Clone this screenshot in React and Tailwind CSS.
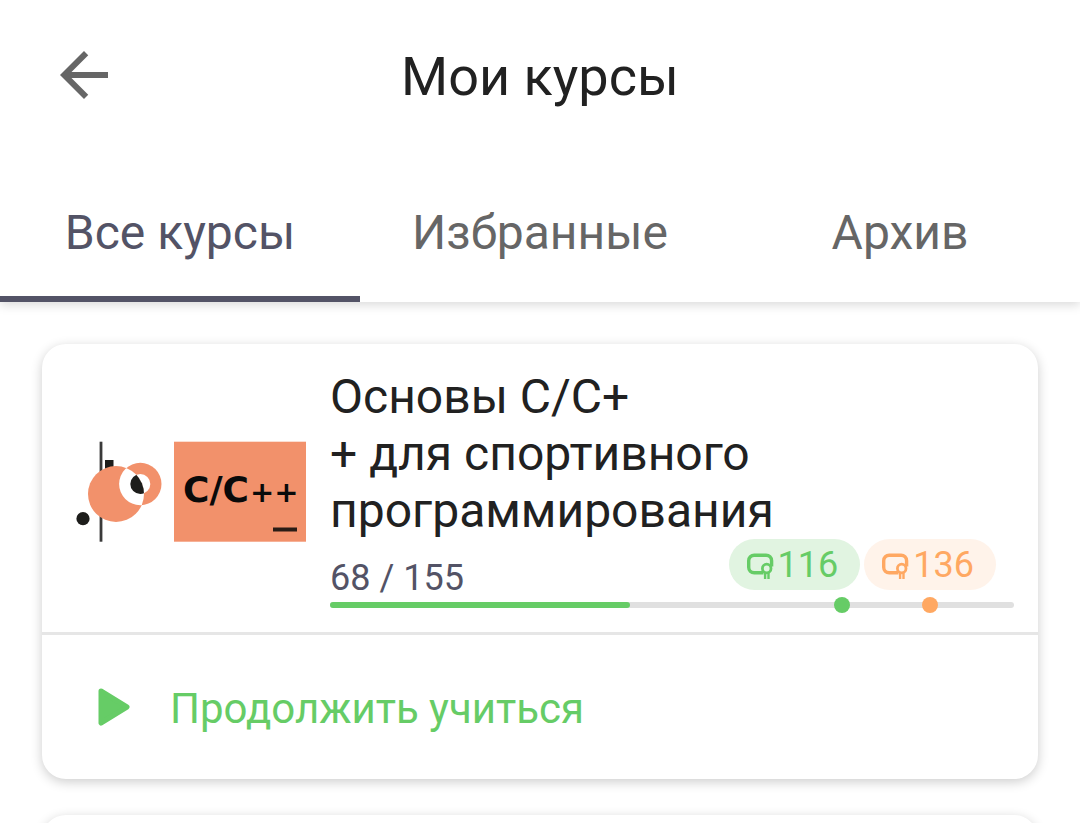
const TOTAL = 155;
const DONE = 68;
const GOALS = [
  { value: 116, pill: "bg-[#e1f4e1] text-[#66cc66]", dot: "bg-[#66cc66]" },
  { value: 136, pill: "bg-[#fff3ea] text-[#ffa862]", dot: "bg-[#ffa862]" },
];
const TABS = ["Все курсы", "Избранные", "Архив"];

const percent = (value) => `${(value / TOTAL) * 100}%`;

function ArrowBack() {
  return (
    <svg viewBox="4 4 16 16" className="size-12" fill="currentColor" aria-hidden="true">
      <path d="M20 11H7.83l5.59-5.59L12 4l-8 8 8 8 1.41-1.41L7.83 13H20v-2z" />
    </svg>
  );
}

function CertificateIcon() {
  return (
    <svg viewBox="0 0 27 28" className="h-7 w-[27px]" fill="none" stroke="currentColor" aria-hidden="true">
      <path d="M16.500 21.800H7.200A5.500 5.500 0 0 1 1.700 16.300V9.700A5.500 5.500 0 0 1 7.200 4.200H19.100A5.500 5.500 0 0 1 24.600 9.700V15.500" strokeWidth="3.400" />
      <circle cx="19.700" cy="17.500" r="4.300" strokeWidth="2.800" />
      <path d="M18.100 21V28M21.500 21V28" strokeWidth="2.400" />
    </svg>
  );
}

function PlayIcon() {
  return (
    <svg viewBox="0 0 32 38" className="h-[38px] w-8" fill="currentColor" stroke="currentColor" strokeWidth="5" strokeLinejoin="round" aria-hidden="true">
      <path d="M3 3L29 19L3 35Z" />
    </svg>
  );
}

function CourseCover() {
  return (
    <svg viewBox="0 0 230 101" className="w-[230px] shrink-0" role="img" aria-label="C/C++">
      <defs>
        <clipPath id="bigCircle">
          <circle cx="40" cy="53" r="28" />
        </clipPath>
      </defs>
      <rect x="23.600" y="0.700" width="2.800" height="100" fill="#3a3a3a" />
      <rect x="29" y="19" width="8.500" height="10" fill="#1d1d1b" />
      <circle cx="7" cy="77.700" r="6.600" fill="#1d1d1b" />
      <circle cx="64.300" cy="43" r="21.200" fill="#f2916b" />
      <circle cx="64.300" cy="43" r="10" fill="#fff" />
      <circle cx="40" cy="53" r="28" fill="#f2916b" />
      <g clipPath="url(#bigCircle)">
        <circle cx="64.300" cy="43" r="21.200" fill="#fff" />
        <circle cx="64.300" cy="43" r="10" fill="#1d1d1b" />
      </g>
      <rect x="98" y="0.700" width="132" height="100" fill="#f2916b" />
      <text y="61" fontWeight="700" fontFamily="'DejaVu Sans', sans-serif" fill="#0a0a0a">
        <tspan x="107" fontSize="36">C/C</tspan>
        <tspan x="174" fontSize="29">++</tspan>
      </text>
      <rect x="197" y="86.500" width="24" height="4" fill="#2a1c16" />
    </svg>
  );
}

function CourseCard() {
  return (
    <article className="rounded-3xl bg-white shadow-[0_3px_12px_rgba(0,0,0,0.2)]">
      <div className="flex items-center gap-6 border-b-3 border-[#e6e6e6] pt-6 pr-6 pb-6 pl-[34px]">
        <div className="shrink-0 pt-1.5">
          <CourseCover />
        </div>
        <div className="min-w-0 flex-1">
          <h2 className="text-[48px] leading-[57px] text-[#212121]">
            Основы C/C+
            <br />+ для спортивного программирования
          </h2>
          <div className="flex items-end justify-between pr-[18px]">
            <p className="text-[36px] leading-6 text-[#535366]">
              {DONE} / {TOTAL}
            </p>
            <ul className="flex gap-1">
              {GOALS.map((goal) => (
                <li key={goal.value} className={`flex h-[51px] items-center gap-1 rounded-full pr-[22px] pl-[18px] text-[36px] leading-10 ${goal.pill}`}>
                  <CertificateIcon />
                  {goal.value}
                </li>
              ))}
            </ul>
          </div>
          <div
            className="relative mt-3 h-1.5 rounded-full bg-[#e0e0e0]"
            role="progressbar"
            aria-label="Прогресс"
            aria-valuenow={DONE}
            aria-valuemax={TOTAL}
          >
            <div className="h-full rounded-full bg-[#66cc66]" style={{ width: percent(DONE) }} />
            {GOALS.map((goal) => (
              <span
                key={goal.value}
                className={`absolute top-1/2 size-4 -translate-1/2 rounded-full ${goal.dot}`}
                style={{ left: percent(goal.value) }}
              />
            ))}
          </div>
        </div>
      </div>
      <button type="button" className="flex h-36 w-full items-center gap-10 pl-14 text-[42px] leading-[50px] text-[#66cc66]">
        <PlayIcon />
        <span className="pt-1">Продолжить учиться</span>
      </button>
    </article>
  );
}

export default function App() {
  return (
    <div className="flex h-screen flex-col overflow-hidden bg-white font-['Roboto',sans-serif]">
      <header className="z-10 shrink-0 bg-white shadow-[0_3px_10px_rgba(0,0,0,0.15)]">
        <div className="grid h-[158px] grid-cols-[48px_1fr_48px] items-center px-15 pb-2">
          <button type="button" aria-label="Назад" className="text-[#666666]">
            <ArrowBack />
          </button>
          <h1 className="pt-1 text-center text-[54px] leading-16 text-[#212121]">Мои курсы</h1>
        </div>
        <nav className="grid grid-cols-3" role="tablist">
          {TABS.map((tab, index) => (
            <button
              key={tab}
              type="button"
              role="tab"
              aria-selected={index === 0}
              className={`h-36 border-b-6 pt-3 text-[48px] leading-14 ${
                index === 0 ? "border-[#535366] text-[#535366]" : "border-transparent text-[#666666]"
              }`}
            >
              {tab}
            </button>
          ))}
        </nav>
      </header>
      <main className="flex flex-col gap-9 px-[42px] pt-[42px]">
        <CourseCard />
        <article className="h-60 shrink-0 rounded-3xl bg-white shadow-[0_3px_12px_rgba(0,0,0,0.2)]" />
      </main>
    </div>
  );
}
